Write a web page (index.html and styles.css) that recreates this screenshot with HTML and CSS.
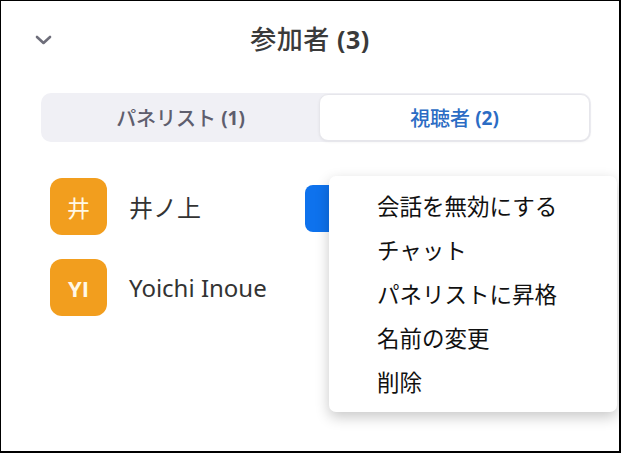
FILE: index.html
```html
<!DOCTYPE html>
<html lang="ja">
<head>
    <meta charset="UTF-8">
    <meta name="viewport" content="width=device-width, initial-scale=1.0">
    <title>参加者</title>
    <link rel="stylesheet" href="styles.css">
</head>
<body>
    <div class="panel">
        <div class="panel-header">
            <svg class="chevron" width="17" height="10" viewBox="0 0 17 10">
                <path d="M2 2 L8.5 8 L15 2" fill="none" stroke="#6e6e7a" stroke-width="2.6" stroke-linecap="round" stroke-linejoin="round"/>
            </svg>
            <h2 class="title">参加者 <b>(3)</b></h2>
            <span></span>
        </div>

        <div class="tabs">
            <div class="tab">パネリスト <b>(1)</b></div>
            <div class="tab active">視聴者 <b>(2)</b></div>
        </div>

        <ul class="attendees">
            <li class="attendee">
                <span class="avatar">井</span>
                <span class="name">井ノ上</span>
                <span class="row-btn"></span>
            </li>
            <li class="attendee">
                <span class="avatar latin">YI</span>
                <span class="name">Yoichi Inoue</span>
            </li>
        </ul>

        <!-- context menu for the hovered attendee -->
        <ul class="menu">
            <li>会話を無効にする</li>
            <li>チャット</li>
            <li>パネリストに昇格</li>
            <li>名前の変更</li>
            <li>削除</li>
        </ul>
    </div>
</body>
</html>
```

FILE: styles.css
```css
body {
    margin: 0;
    background: #fff;
    font-family: "Noto Sans", "Noto Sans CJK JP", sans-serif;
}
.panel {
    position: relative;
    width: 621px;
    height: 453px;
    box-sizing: border-box;
    border: 1px solid #000;
    border-bottom-width: 2px;
    border-right-width: 2px;
    background: #fff;
    overflow: hidden;
}
.panel-header {
    display: grid;
    grid-template-columns: 1fr auto 1fr;
    align-items: center;
    height: 76px;
    padding: 0 34px;
}
.chevron {
    display: block;
    margin-top: 2px;
}
.title {
    margin: 0;
    font-size: 26px;
    font-weight: 500;
    color: #3a3a3a;
    line-height: 32px;
    letter-spacing: 0.5px;
}
.title b {
    font-family: "Open Sans", sans-serif;
    font-weight: 700;
    font-size: 25px;
}
.tabs {
    display: grid;
    grid-template-columns: 277px 1fr;
    height: 49px;
    margin: 16px 28px 0 40px;
    padding: 1px;
    box-sizing: border-box;
    background: #f0f0f5;
    border-radius: 10px;
}
.tab {
    display: flex;
    align-items: center;
    justify-content: center;
    gap: 5px;
    font-size: 20px;
    font-weight: 500;
    color: #5e5e6e;
}
.tab b {
    font-family: "Open Sans", sans-serif;
    font-weight: 700;
    font-size: 19px;
}
.tab.active {
    background: #fff;
    color: #2b6cc4;
    border: 1px solid #e6e6eb;
    border-radius: 9px;
    box-shadow: 0 1px 3px rgba(0, 0, 0, 0.06);
}
.attendees {
    list-style: none;
    margin: 36px 0 0;
    padding: 0 0 0 49px;
    display: flex;
    flex-direction: column;
    gap: 24px;
}
.attendee {
    display: grid;
    grid-template-columns: 57px 176px 90px;
    column-gap: 22px;
    align-items: center;
    height: 57px;
}
.avatar {
    display: flex;
    align-items: center;
    justify-content: center;
    width: 57px;
    height: 57px;
    border-radius: 12px;
    background: #f29e1e;
    color: #fff8e6;
    font-size: 23px;
}
.avatar.latin {
    font-family: "Open Sans", sans-serif;
    font-weight: 700;
    font-size: 22px;
}
.name {
    font-size: 24px;
    color: #333;
}
.row-btn {
    height: 47px;
    margin-left: -22px;
    margin-top: 3px;
    background: #0e72ed;
    border-radius: 8px;
}
.menu {
    position: absolute;
    left: 328px;
    top: 175px;
    width: 288px;
    height: 236px;
    box-sizing: border-box;
    margin: 0;
    padding: 9px 0 0 48px;
    list-style: none;
    background: #fff;
    border-radius: 7px;
    box-shadow: 0 5px 14px rgba(0, 0, 0, 0.22);
}
.menu li {
    height: 44px;
    line-height: 44px;
    font-size: 22.5px;
    color: #111;
}
```
